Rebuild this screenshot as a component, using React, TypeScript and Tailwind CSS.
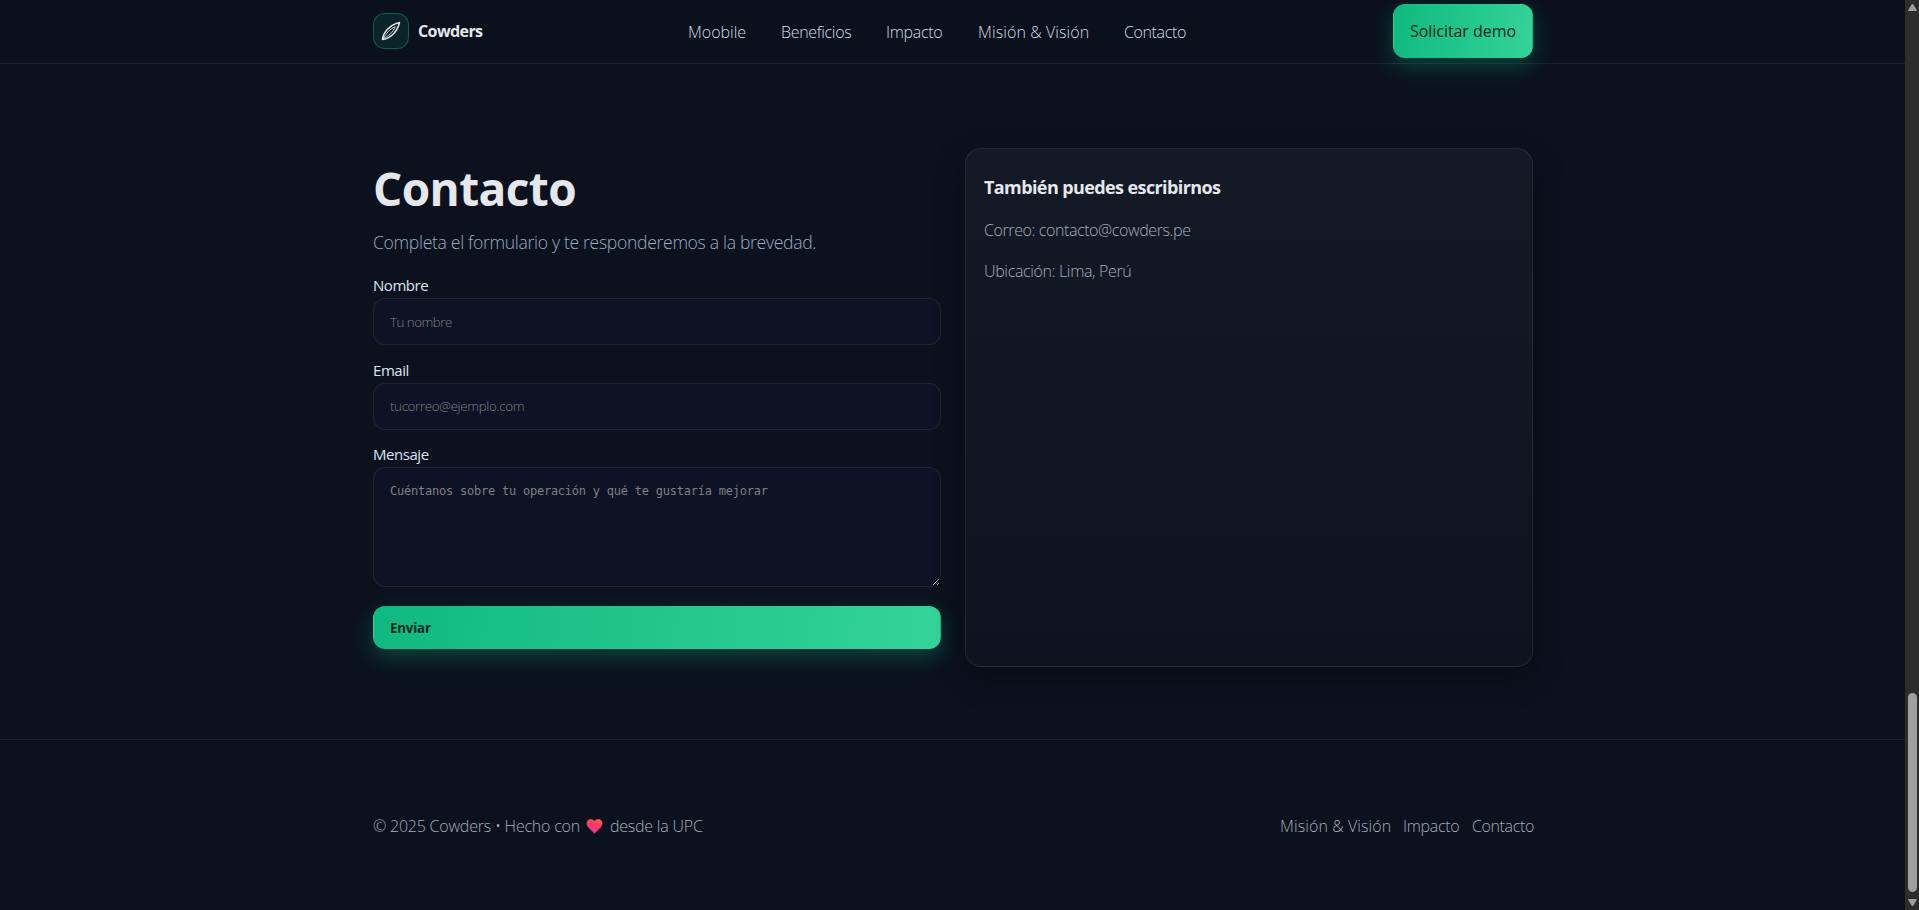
import React from "react";

const navLinks = [
  { label: "Moobile", fit: "w-[58px] tracking-[0px]" },
  { label: "Beneficios", fit: "w-[70px] tracking-[-0.32px]" },
  { label: "Impacto", fit: "w-[57px] tracking-[-0.3px]" },
  { label: "Misión & Visión", fit: "w-[111px] tracking-[0.1px]" },
  { label: "Contacto", fit: "w-[62px] tracking-[-0.38px]" },
];

const footerLinks = [
  { label: "Misión & Visión", fit: "w-[111px] tracking-[0.1px]" },
  { label: "Impacto", fit: "w-[57px] tracking-[-0.3px]" },
  { label: "Contacto", fit: "w-[61px] tracking-[-0.38px]" },
];

function Logo() {
  return (
    <div className="flex items-center gap-[9px]">
      <div className="flex size-9 items-center justify-center rounded-[12px] border border-[#10b981]/40 bg-[#10b981]/12">
        <svg width="20" height="20" viewBox="0 0 20 20" fill="none" stroke="#e5e7eb" strokeLinejoin="round">
          <path d="M1.500 18.500C2 12 8 4 18.500 1.500C16 12 8 18 1.500 18.500Z" strokeWidth="1.5" />
          <path d="M2 18C6.500 15.500 12.500 11 14.300 5.700C9 7.500 4.500 13.500 2 18Z" strokeWidth="0.9" />
        </svg>
      </div>
      <span className="text-[16px] font-bold tracking-[-0.6px] text-[#e5e7eb]">Cowders</span>
    </div>
  );
}

function Header() {
  return (
    <header className="h-16 shrink-0 border-b border-white/8 bg-[#0a111d] pl-px">
      <div className="mx-auto grid h-[62px] w-[1160px] grid-cols-[315px_1fr_140px] items-center">
        <Logo />
        <nav className="flex gap-[35px] pt-px text-[16px] font-light whitespace-nowrap text-[#d3dce7]">
          {navLinks.map(({ label, fit }) => (
            <a key={label} className={fit}>
              {label}
            </a>
          ))}
        </nav>
        <button className="h-[54px] w-[140px] rounded-[12px] border border-transparent bg-[linear-gradient(100deg,#10b981,#34d399)] text-[16px] font-medium tracking-[-0.05px] whitespace-nowrap text-[#05291f] shadow-[0_8px_20px_rgba(16,185,129,0.3)]">
          Solicitar demo
        </button>
      </div>
    </header>
  );
}

function Field({ label, children }: { label: string; children: React.ReactNode }) {
  return (
    <label className="flex flex-col">
      <span className="h-[23px] text-[15px] leading-[21px] tracking-[-0.45px] text-[#dbe4ee]">{label}</span>
      {children}
    </label>
  );
}

const control =
  "w-full rounded-[12px] border border-white/8 bg-[#0d1224] px-4 placeholder:text-[#7f8083] outline-none";

function ContactForm() {
  return (
    <div className="w-[568px] pt-[12px]">
      <h1 className="h-[60px] text-[46px] leading-[56px] font-bold tracking-[-0.6px] text-[#e5e7eb]">Contacto</h1>
      <p className="mt-[7px] h-[48px] text-[17.6px] leading-[31px] font-light tracking-[-0.32px] whitespace-nowrap text-[#9dabc0]">
        Completa el formulario y te responderemos a la brevedad.
      </p>
      <form className="flex flex-col">
        <Field label="Nombre">
          <input className={`${control} h-[47px] text-[13.33px] font-light tracking-[-0.5px]`} placeholder="Tu nombre" />
        </Field>
        <div className="h-[15px]" />
        <Field label="Email">
          <input className={`${control} h-[47px] pb-[2px] text-[13.33px] font-light tracking-[-0.35px]`} placeholder="tucorreo@ejemplo.com" />
        </Field>
        <div className="h-[14px]" />
        <Field label="Mensaje">
          <textarea
            className={`${control} h-[120px] resize-y pt-[14px] font-['DejaVu_Sans_Mono',monospace] text-[12px] tracking-[-0.23px]`}
            placeholder="Cuéntanos sobre tu operación y qué te gustaría mejorar"
          />
        </Field>
        <button
          type="button"
          className="mt-[19px] h-[43px] rounded-[12px] border border-transparent bg-[linear-gradient(100deg,#10b981,#34d399)] px-4 pt-[2px] text-left text-[13.33px] font-bold tracking-[-0.2px] text-[#05291f] shadow-[0_8px_20px_rgba(16,185,129,0.3)]"
        >
          Enviar
        </button>
      </form>
    </div>
  );
}

function ContactCard() {
  return (
    <aside className="h-[519px] w-[568px] rounded-[16px] border border-white/8 bg-linear-to-b from-[#131a26] to-[#0d1420] px-[18px] pt-[24px] shadow-[0_10px_30px_rgba(0,0,0,0.35)]">
      <h3 className="h-[31px] text-[18px] leading-[28px] font-bold tracking-[-0.6px] text-[#e5e7eb]">
        También puedes escribirnos
      </h3>
      <p className="mt-[13px] text-[16px] leading-[27px] font-light tracking-[-0.4px] text-[#a6adb8]">
        Correo: contacto@cowders.pe
      </p>
      <p className="mt-[14px] text-[16px] leading-[27px] font-light tracking-[-0.34px] text-[#a6adb8]">
        Ubicación: Lima, Perú
      </p>
    </aside>
  );
}

function Heart() {
  return (
    <svg width="17" height="15" viewBox="0 0 17 15" className="mr-[7px] ml-[6px] inline-block align-[-2px]">
      <defs>
        <linearGradient id="heart" x1="0.8" y1="0" x2="0.4" y2="1">
          <stop offset="0" stopColor="#ff5a52" />
          <stop offset="0.45" stopColor="#fa3a5c" />
          <stop offset="1" stopColor="#f62fa8" />
        </linearGradient>
      </defs>
      <path
        d="M8.500 2.200C10 -0.100 13 0 14.500 0.700C16.800 2 17 5.500 15 8C13 10.500 10 12.500 8.500 14.800C7 12.500 4 10.500 2 8C0 5.500 0.200 2 2.500 0.700C4 0 7 -0.100 8.500 2.200Z"
        fill="url(#heart)"
      />
    </svg>
  );
}

function Footer() {
  return (
    <footer className="flex-1 border-t border-white/8 pl-px">
      <div className="mx-auto mt-[72px] flex h-[28px] w-[1160px] items-center justify-between text-[16px] font-light whitespace-nowrap text-[#a6adb8]">
        <p className="tracking-[-0.22px]">
          © 2025 Cowders • Hecho con
          <Heart />
          desde la UPC
        </p>
        <div className="flex gap-3">
          {footerLinks.map(({ label, fit }) => (
            <a key={label} className={fit}>
              {label}
            </a>
          ))}
        </div>
      </div>
    </footer>
  );
}

function Scrollbar() {
  return (
    <div className="flex w-[14px] shrink-0 flex-col items-center justify-between bg-[#2c2c2c] pt-[4px] pb-[4px]">
      <svg width="9" height="7" viewBox="0 0 9 7" fill="#9f9f9f">
        <path d="M4.500 0Q5.200 0 5.700 1L9 6.500Q9 7 8.500 7H0.500Q0 7 0 6.500L3.300 1Q3.800 0 4.500 0Z" />
      </svg>
      <div className="flex flex-col items-center gap-[7px]">
        <div className="h-[199px] w-[9px] rounded-full bg-[#9f9f9f]" />
        <svg width="9" height="7" viewBox="0 0 9 7" fill="#9f9f9f">
          <path d="M4.500 7Q5.200 7 5.700 6L9 0.500Q9 0 8.500 0H0.500Q0 0 0 0.500L3.300 6Q3.800 7 4.500 7Z" />
        </svg>
      </div>
    </div>
  );
}

export default function App() {
  return (
    <div className="flex h-[910px] w-full overflow-hidden bg-[#0b121e] font-['Open_Sans',sans-serif]">
      <div className="flex min-w-0 flex-1 flex-col">
        <Header />
        <div className="shrink-0 pl-px">
          <main className="mx-auto flex h-[675px] w-[1160px] items-start gap-6 pt-[84px]">
            <ContactForm />
            <ContactCard />
          </main>
        </div>
        <Footer />
      </div>
      <Scrollbar />
    </div>
  );
}
